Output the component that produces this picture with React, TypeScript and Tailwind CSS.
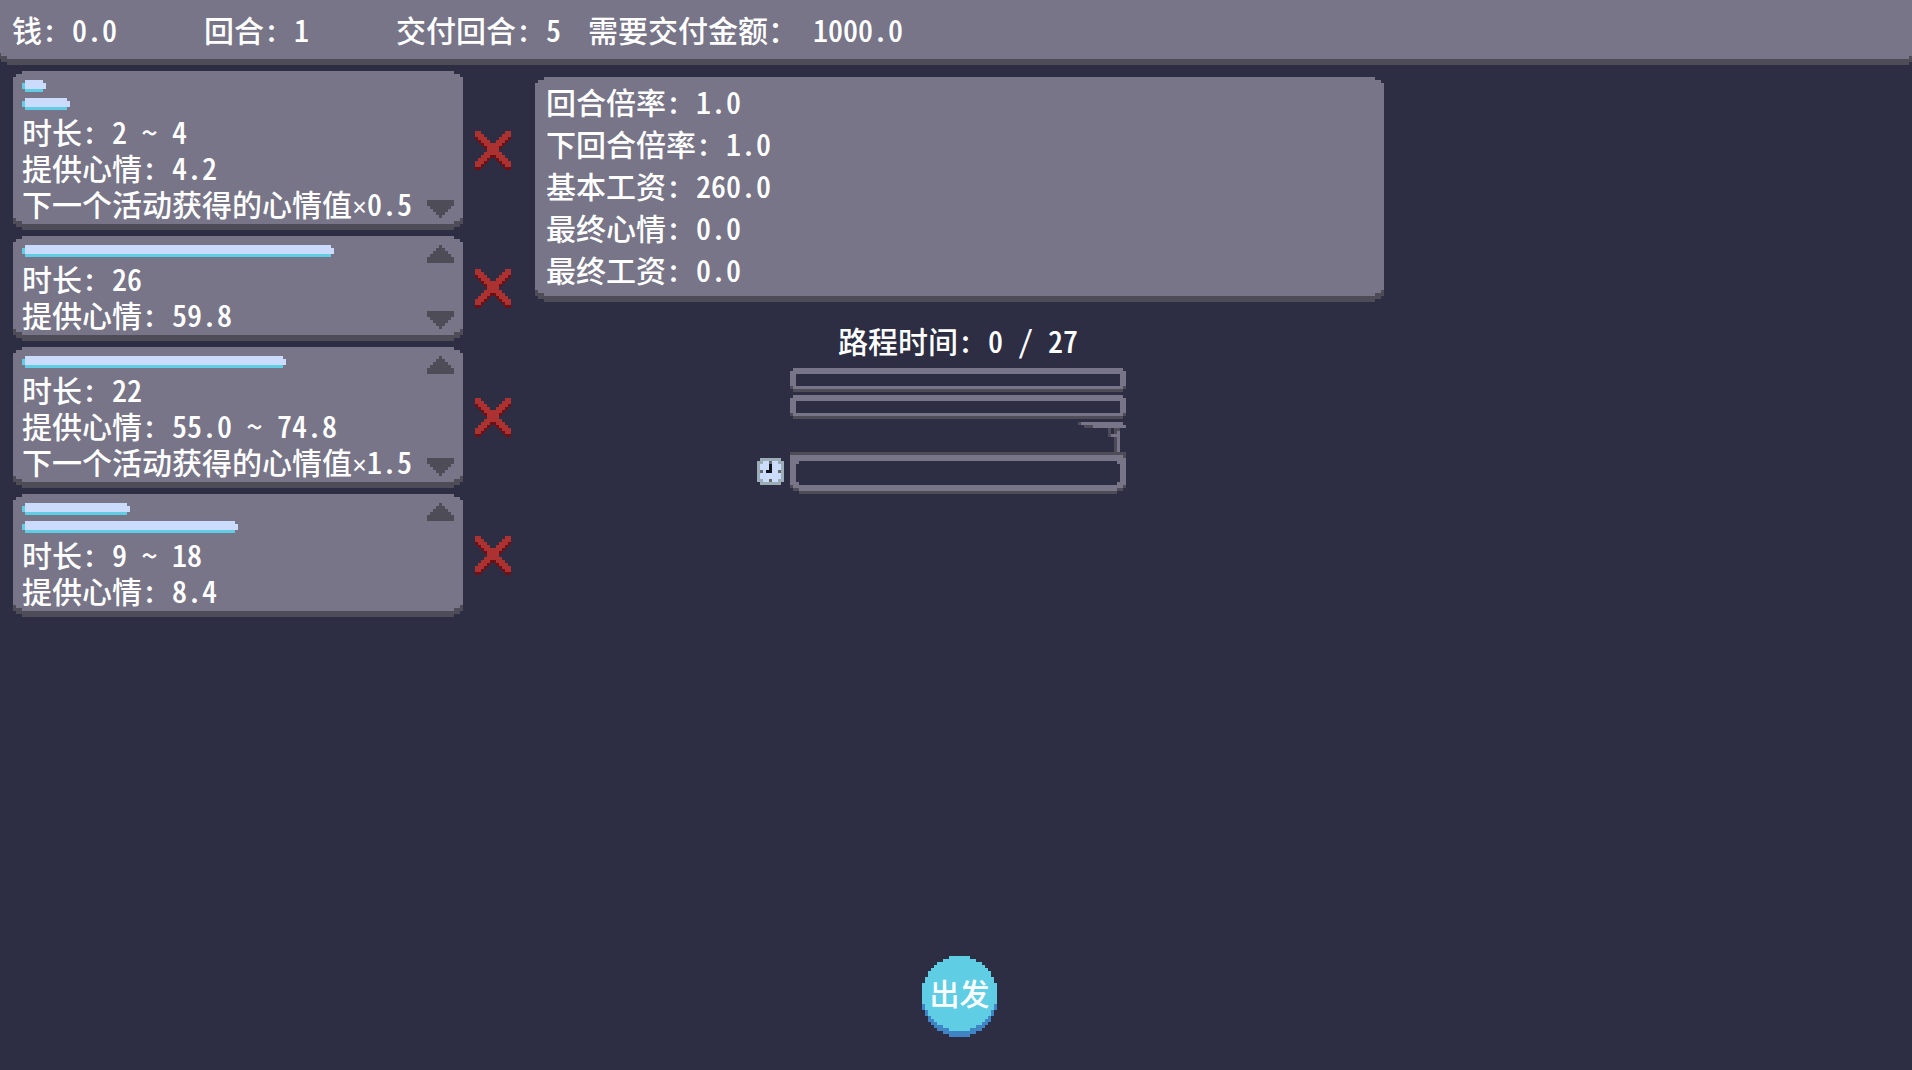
import type { ReactNode } from 'react'
import clsx from 'clsx'

// every sprite pixel is 3 screen pixels
const PX = 3

const stepped =
    '[clip-path:polygon(9px_0,calc(100%_-_9px)_0,calc(100%_-_9px)_3px,calc(100%_-_3px)_3px,calc(100%_-_3px)_6px,100%_6px,100%_calc(100%_-_6px),calc(100%_-_3px)_calc(100%_-_6px),calc(100%_-_3px)_calc(100%_-_3px),calc(100%_-_9px)_calc(100%_-_3px),calc(100%_-_9px)_100%,9px_100%,9px_calc(100%_-_3px),3px_calc(100%_-_3px),3px_calc(100%_-_6px),0_calc(100%_-_6px),0_6px,3px_6px,3px_3px,9px_3px)]'

const notched =
    '[clip-path:polygon(3px_0,calc(100%_-_3px)_0,calc(100%_-_3px)_3px,100%_3px,100%_calc(100%_-_3px),calc(100%_-_3px)_calc(100%_-_3px),calc(100%_-_3px)_100%,3px_100%,3px_calc(100%_-_3px),0_calc(100%_-_3px),0_3px,3px_3px)]'

type Run = [x: number, y: number, w: number, h: number, fill: string]

const LIGHT = '#777587'
const DARK = '#4d4c57'

const crossRows = [
    [[0, 2], [10, 2]],
    [[0, 3], [9, 3]],
    [[1, 3], [8, 3]],
    [[2, 3], [7, 3]],
    [[3, 6]],
    [[4, 4]],
    [[4, 4]],
    [[3, 6]],
    [[2, 3], [7, 3]],
    [[1, 3], [8, 3]],
    [[0, 3], [9, 3]],
    [[0, 2], [10, 2]],
]

const crossRuns: Run[] = [
    ...crossRows.flatMap((row, y) => row.map(([x, w]): Run => [x, y + 1, w, 1, '#6e0f14'])),
    ...crossRows.flatMap((row, y) => row.map(([x, w]): Run => [x, y, w, 1, '#ac3232'])),
]

const upRuns: Run[] = [
    [4, 0, 1, 1, DARK],
    [3, 1, 3, 1, DARK],
    [2, 2, 5, 1, DARK],
    [1, 3, 7, 1, DARK],
    [0, 4, 9, 2, DARK],
]

const downRuns: Run[] = [
    [0, 0, 9, 2, DARK],
    [1, 2, 7, 1, DARK],
    [2, 3, 5, 1, DARK],
    [3, 4, 3, 1, DARK],
    [4, 5, 1, 1, DARK],
]

const clockRuns: Run[] = [
    [1, 0, 7, 9, '#9badb7'],
    [0, 1, 9, 7, '#9badb7'],
    [2, 1, 5, 7, '#cbdbfc'],
    [1, 2, 7, 5, '#cbdbfc'],
    [4, 1, 1, 1, '#696a6a'],
    [1, 4, 1, 1, '#696a6a'],
    [7, 4, 1, 1, '#696a6a'],
    [4, 7, 1, 1, '#696a6a'],
    [4, 2, 1, 3, '#10141f'],
    [3, 4, 1, 1, '#10141f'],
]

// bus stop standing on the right end of the road
const roadRuns: Run[] = [
    [96, 0, 1, 1, DARK],
    [97, 0, 14, 1, LIGHT],
    [98, 1, 3, 1, DARK],
    [101, 1, 11, 1, LIGHT],
    [106, 2, 1, 3, DARK],
    [108, 2, 2, 1, DARK],
    [108, 3, 1, 7, DARK],
    [109, 3, 1, 7, LIGHT],
    [107, 4, 3, 1, LIGHT],
    [0, 10, 112, 12, DARK],
    [1, 22, 110, 1, DARK],
    [3, 23, 106, 1, DARK],
    [0, 11, 111, 2, LIGHT],
    [0, 12, 112, 9, LIGHT],
    [1, 21, 110, 1, LIGHT],
    [3, 22, 106, 1, LIGHT],
    [3, 13, 106, 8, '#2d2e43'],
    [2, 14, 108, 6, '#2d2e43'],
]

const discInsets = [9, 7, 5, 4, 3, 2, 2, 1, 1, 0, 0, 0, 0, 0, 0, 0, 1, 1, 2, 2, 3, 4, 5, 7, 9]
const discRuns: Run[] = [
    ...discInsets.map((n, y): Run => [n, y + 2, 25 - n * 2, 1, '#3f84c5']),
    ...discInsets.map((n, y): Run => [n, y, 25 - n * 2, 1, '#5fcde4']),
]

function Sprite({ runs, w, h, className }: { runs: Run[]; w: number; h: number; className?: string }) {
    return (
        <svg
            width={w * PX}
            height={h * PX}
            viewBox={`0 0 ${w} ${h}`}
            shapeRendering="crispEdges"
            className={className}
            aria-hidden="true"
        >
            {runs.map(([x, y, rw, rh, fill], i) => (
                <rect key={i} x={x} y={y} width={rw} height={rh} fill={fill} />
            ))}
        </svg>
    )
}

function Panel({ children, className }: { children: ReactNode; className?: string }) {
    return (
        <div className={clsx('bg-[#4d4c57] pb-[6px]', stepped)}>
            <div className={clsx('bg-[#777587]', stepped, className)}>{children}</div>
        </div>
    )
}

function HourBar({ hours }: { hours: number }) {
    return (
        <div className={clsx('h-3 bg-[#5fcde4]', notched)} style={{ width: hours * 12 }}>
            <div className="ml-[3px] h-[9px] bg-[#cbdbfc] [clip-path:polygon(0_0,calc(100%_-_3px)_0,calc(100%_-_3px)_3px,100%_3px,100%_100%,0_100%)]" />
        </div>
    )
}

function Track({ label }: { label: string }) {
    return (
        <div
            role="progressbar"
            aria-label={label}
            aria-valuenow={0}
            aria-valuemax={27}
            className={clsx('col-start-2 bg-[#4d4c57] pb-[3px]', notched)}
        >
            <div className={clsx('bg-[#777587] px-[6px] pt-[6px] pb-[3px]', notched)}>
                <div className="h-3 bg-[#2d2e43]" />
            </div>
        </div>
    )
}

const stats = [
    { label: '钱: ', value: '0.0' },
    { label: '回合: ', value: '1' },
    { label: '交付回合: ', value: '5' },
    { label: '需要交付金额： ', value: '1000.0' },
]

const activities = [
    { bars: [2, 4], duration: '2 ~ 4', mood: '4.2', next: '0.5' },
    { bars: [26], duration: '26', mood: '59.8' },
    { bars: [22], duration: '22', mood: '55.0 ~ 74.8', next: '1.5' },
    { bars: [9, 18], duration: '9 ~ 18', mood: '8.4' },
]

const summary = [
    { label: '回合倍率', value: '1.0' },
    { label: '下回合倍率', value: '1.0' },
    { label: '基本工资', value: '260.0' },
    { label: '最终心情', value: '0.0' },
    { label: '最终工资', value: '0.0' },
]

export default function App() {
    return (
        <div className="flex min-h-screen flex-col overflow-hidden bg-[#2d2e43] font-['Noto_Sans_CJK_SC',sans-serif] text-[30px] leading-9 font-medium whitespace-pre text-white [font-feature-settings:'hwid']">
            <header className="overflow-hidden">
                <div className="-mt-[9px] -mr-[6px] -ml-[2px]">
                    <Panel className="flex pt-5 pr-3 pb-3 pl-[14px]">
                        {stats.map((s) => (
                            <p key={s.label} className="min-w-48">
                                {s.label}
                                {s.value}
                            </p>
                        ))}
                    </Panel>
                </div>
            </header>

            <main className="grid flex-1 grid-cols-[498px_1fr_504px] gap-x-6 pt-[6px] pl-[13px]">
                <ul className="flex flex-col gap-[6px]">
                    {activities.map((a, i) => (
                        <li key={i} className="grid grid-cols-[1fr_36px] items-center gap-x-3">
                            <Panel className="flex justify-between px-[9px] pt-[9px]">
                                <div className="flex flex-col pb-[3px]">
                                    <div className="flex flex-col gap-[6px] pb-[3px]">
                                        {a.bars.map((hours) => (
                                            <HourBar key={hours} hours={hours} />
                                        ))}
                                    </div>
                                    <p>时长: {a.duration}</p>
                                    <p>提供心情: {a.mood}</p>
                                    {a.next && (
                                        <p className="h-9">
                                            下一个活动获得的心情值
                                            <span className="font-['Liberation_Mono',monospace] text-[25px] leading-none">×</span>
                                            {a.next}
                                        </p>
                                    )}
                                </div>
                                <div className="flex flex-col pb-[6px]">
                                    {i > 0 && (
                                        <button type="button" aria-label="上移">
                                            <Sprite runs={upRuns} w={9} h={6} className="block" />
                                        </button>
                                    )}
                                    {i < activities.length - 1 && (
                                        <button type="button" aria-label="下移" className="mt-auto">
                                            <Sprite runs={downRuns} w={9} h={6} className="block" />
                                        </button>
                                    )}
                                </div>
                            </Panel>
                            <button type="button" aria-label="删除">
                                <Sprite runs={crossRuns} w={12} h={13} className="block" />
                            </button>
                        </li>
                    ))}
                </ul>

                <section className="flex flex-col pt-[6px]">
                    <Panel className="flex flex-col gap-[6px] px-[11px] pt-[6px] pb-[9px]">
                        {summary.map((s) => (
                            <p key={s.label}>
                                {s.label}: {s.value}
                            </p>
                        ))}
                    </Panel>

                    <div className="mt-5 flex flex-col items-center gap-[10px] pr-[3px]">
                        <p>路程时间: 0 / 27</p>
                        <div className="grid grid-cols-[27px_336px_27px] gap-x-[6px] gap-y-[3px]">
                            <Track label="最短时间" />
                            <Track label="最长时间" />
                            <Sprite runs={clockRuns} w={9} h={9} className="col-start-1 mb-[9px] block self-end" />
                            <Sprite runs={roadRuns} w={112} h={24} className="block" />
                        </div>
                    </div>

                    <button type="button" className="mx-auto mt-auto mb-[33px] grid place-items-center">
                        <Sprite runs={discRuns} w={25} h={27} className="col-start-1 row-start-1 block" />
                        <span className="col-start-1 row-start-1 pb-[10px]">出发</span>
                    </button>
                </section>
            </main>
        </div>
    )
}
